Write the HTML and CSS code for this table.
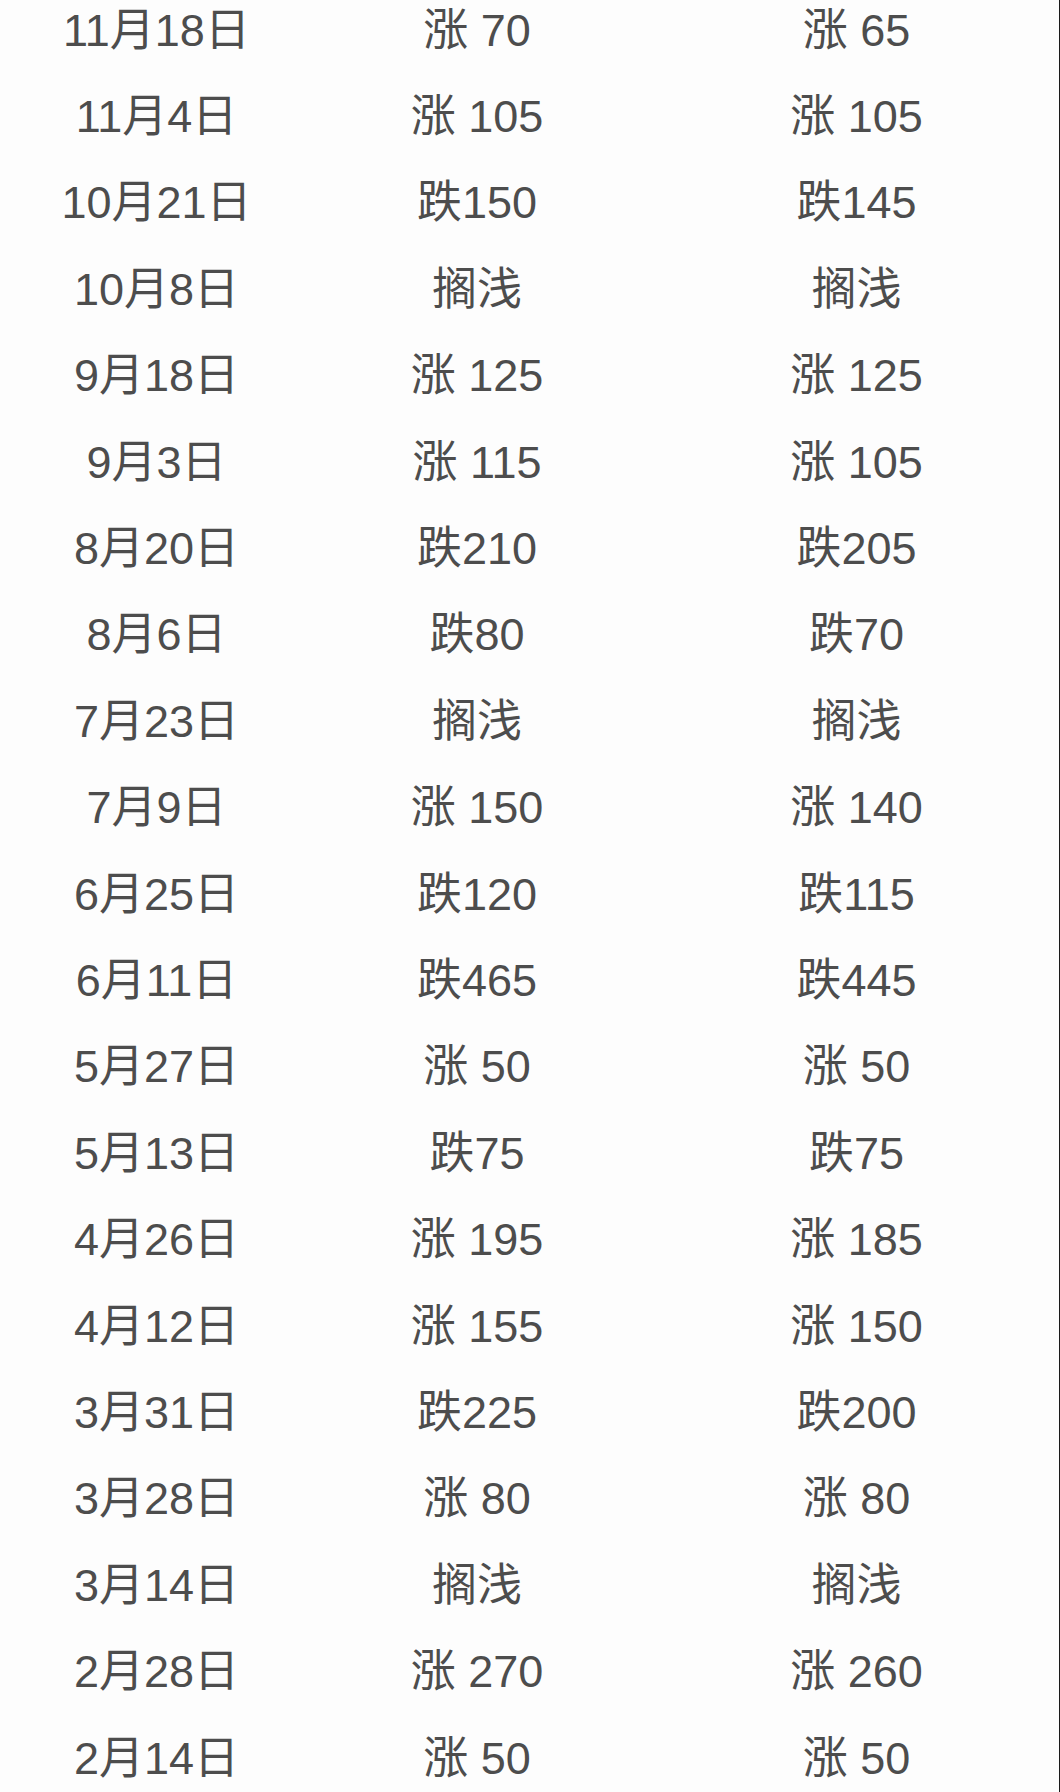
FILE: index.html
```html
<!DOCTYPE html>
<html lang="zh-CN">
<head>
<meta charset="utf-8">
<title>价格调整记录</title>
<link rel="stylesheet" href="styles.css">
</head>
<body>
<div class="page">
  <div class="table">
    <div class="cell c1">11月18日</div><div class="cell c2">涨 70</div><div class="cell c3">涨 65</div>
    <div class="cell c1">11月4日</div><div class="cell c2">涨 105</div><div class="cell c3">涨 105</div>
    <div class="cell c1">10月21日</div><div class="cell c2">跌150</div><div class="cell c3">跌145</div>
    <div class="cell c1">10月8日</div><div class="cell c2">搁浅</div><div class="cell c3">搁浅</div>
    <div class="cell c1">9月18日</div><div class="cell c2">涨 125</div><div class="cell c3">涨 125</div>
    <div class="cell c1">9月3日</div><div class="cell c2">涨 115</div><div class="cell c3">涨 105</div>
    <div class="cell c1">8月20日</div><div class="cell c2">跌210</div><div class="cell c3">跌205</div>
    <div class="cell c1">8月6日</div><div class="cell c2">跌80</div><div class="cell c3">跌70</div>
    <div class="cell c1">7月23日</div><div class="cell c2">搁浅</div><div class="cell c3">搁浅</div>
    <div class="cell c1">7月9日</div><div class="cell c2">涨 150</div><div class="cell c3">涨 140</div>
    <div class="cell c1">6月25日</div><div class="cell c2">跌120</div><div class="cell c3">跌115</div>
    <div class="cell c1">6月11日</div><div class="cell c2">跌465</div><div class="cell c3">跌445</div>
    <div class="cell c1">5月27日</div><div class="cell c2">涨 50</div><div class="cell c3">涨 50</div>
    <div class="cell c1">5月13日</div><div class="cell c2">跌75</div><div class="cell c3">跌75</div>
    <div class="cell c1">4月26日</div><div class="cell c2">涨 195</div><div class="cell c3">涨 185</div>
    <div class="cell c1">4月12日</div><div class="cell c2">涨 155</div><div class="cell c3">涨 150</div>
    <div class="cell c1">3月31日</div><div class="cell c2">跌225</div><div class="cell c3">跌200</div>
    <div class="cell c1">3月28日</div><div class="cell c2">涨 80</div><div class="cell c3">涨 80</div>
    <div class="cell c1">3月14日</div><div class="cell c2">搁浅</div><div class="cell c3">搁浅</div>
    <div class="cell c1">2月28日</div><div class="cell c2">涨 270</div><div class="cell c3">涨 260</div>
    <div class="cell c1">2月14日</div><div class="cell c2">涨 50</div><div class="cell c3">涨 50</div>
  </div>
</div>
</body>
</html>
```

FILE: styles.css
```css
html, body {
  margin: 0;
  padding: 0;
  background: #ffffff;
  overflow: hidden;
}

.page {
  box-sizing: border-box;
  width: 1060px;
  height: 1792px;
  overflow: hidden;
  background: #fdfdfd;
  border-right: 1px solid #1a1a1a;
}

.table {
  display: grid;
  grid-template-columns: 313px 328px 1fr;
  grid-auto-rows: 86.4px;
  margin-top: -13px;
  font-family: "Liberation Sans", "Noto Sans CJK SC", sans-serif;
  font-size: 45px;
  line-height: 1;
  color: #4d4d4d;
}

.cell {
  display: flex;
  align-items: center;
  justify-content: center;
  white-space: pre;
}

.c3 {
  padding-left: 13px;
}
```
